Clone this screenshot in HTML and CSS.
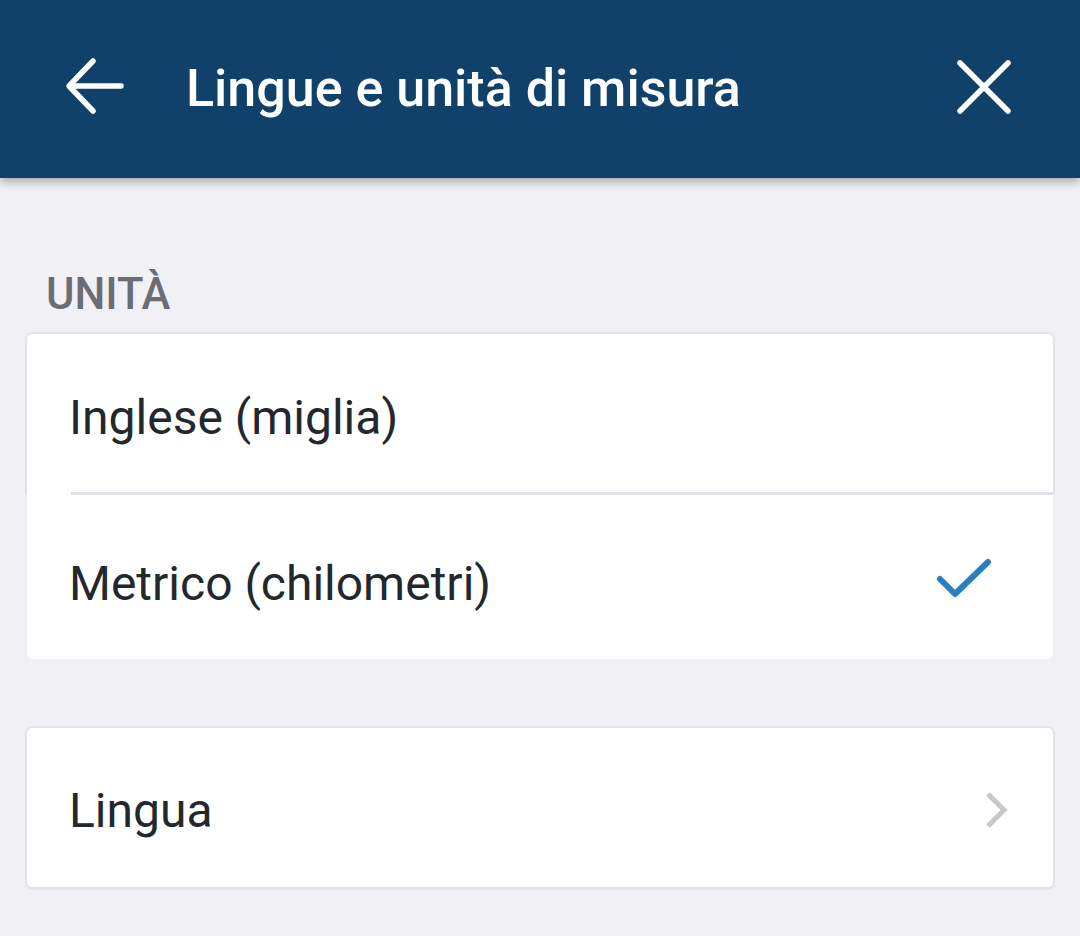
FILE: index.html
```html
<!DOCTYPE html>
<html lang="it">
<head>
<meta charset="utf-8">
<title>Lingue e unità di misura</title>
<link rel="stylesheet" href="styles.css">
</head>
<body>
<header class="appbar">
  <svg class="icon back" viewBox="0 0 64 64" width="64" height="64">
    <path d="M59 32 H8 M31 7 L7 32 L31 57" fill="none" stroke="#fff" stroke-width="5.5" stroke-linecap="round" stroke-linejoin="round"/>
  </svg>
  <h1 class="title">Lingue e unità di misura</h1>
  <svg class="icon close" viewBox="0 0 64 64" width="64" height="64">
    <path d="M8 8 L56 56 M56 8 L8 56" fill="none" stroke="#fff" stroke-width="5.5" stroke-linecap="round"/>
  </svg>
</header>
<main class="content">
  <h2 class="section-label">UNITÀ</h2>
  <div class="card">
    <div class="row row-first"><span class="row-text">Inglese (miglia)</span></div>
    <div class="row row-last">
      <span class="row-text">Metrico (chilometri)</span>
      <svg class="check" viewBox="0 0 64 48" width="64" height="48">
        <path d="M6 26 L21 41 L54 9" fill="none" stroke="#2a7fc3" stroke-width="6" stroke-linecap="round" stroke-linejoin="round"/>
      </svg>
    </div>
  </div>
  <div class="card card-single">
    <div class="row row-single">
      <span class="row-text row-text-lingua">Lingua</span>
      <svg class="chevron" viewBox="0 0 30 40" width="30" height="40">
        <path d="M6 4 L22 20 L6 36" fill="none" stroke="#c7c7c7" stroke-width="5"/>
      </svg>
    </div>
  </div>
</main>
</body>
</html>
```

FILE: styles.css
```css
* { box-sizing: border-box; }
html, body { margin: 0; padding: 0; }
body {
  background: #f0f0f5;
  font-family: Roboto, "Noto Sans", "Liberation Sans", sans-serif;
  width: 1080px;
  height: 936px;
  overflow: hidden;
}
.appbar {
  height: 178px;
  background: #10416b;
  display: flex;
  align-items: center;
  padding: 0 64px 0 62px;
  box-shadow: 0 3px 10px rgba(0,0,0,0.35);
  position: relative;
  z-index: 1;
}
.icon { display: block; flex: none; }
.back { margin-top: -6px; }
.close { margin-top: -4px; margin-left: auto; }
.title {
  margin: -2px 0 0 60px;
  color: #ffffff;
  font-size: 52px;
  font-weight: 500;
  letter-spacing: 0;
}
.content { padding: 92px 25px 0 25px; }
.section-label {
  margin: 0 0 12px 21px;
  font-size: 43.5px;
  font-weight: 500;
  color: #6c6c74;
  line-height: 50px;
}
.card { border-radius: 7px; }
.row {
  display: flex;
  align-items: center;
  background: #fff;
  padding: 0 0 0 42px;
}
.row-text {
  font-size: 48px;
  color: #23282c;
  padding-top: 12px;
}
.row-first {
  height: 163px;
  border: 2px solid #e2e2e9;
  border-bottom: none;
  border-radius: 7px 7px 0 0;
  position: relative;
}
.row-first .row-text { padding-top: 6px; }
.row-first::after {
  content: "";
  position: absolute;
  left: 44px;
  right: -2px;
  bottom: 0;
  height: 3px;
  background: #e2e2e9;
}
.row-last {
  height: 164px;
  margin: 0 2px;
  padding-left: 42px;
  border-radius: 0 0 6px 6px;
  padding-right: 55px;
}
.check { margin-left: auto; margin-top: 0; }
.card-single { margin-top: 67px; }
.row-single {
  height: 164px;
  border: 2px solid #e2e2e9;
  border-bottom-width: 3px;
  border-radius: 7px;
  padding-right: 41px;
}
.row-text-lingua { padding-top: 6px; }
.chevron { margin-left: auto; margin-top: 4px; }
```
